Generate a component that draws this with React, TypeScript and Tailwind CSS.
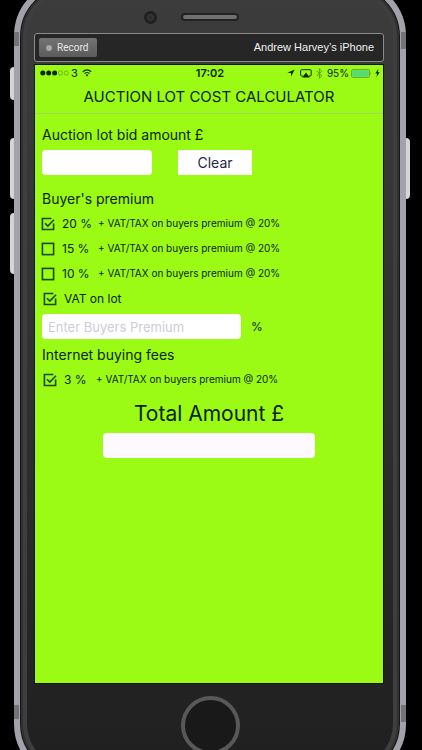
import { useState } from 'react';

type FeeRowProps = {
  id: string;
  label: string;
  note?: string;
  checked?: boolean;
  inset?: boolean;
};

function FeeRow({ id, label, note, checked = false, inset = false }: FeeRowProps) {
  const [on, setOn] = useState(checked);
  return (
    <div className={inset ? 'flex h-[25px] items-center pl-[2px]' : 'flex h-[25px] items-center'}>
      <span className="grid size-[14px] shrink-0 place-items-center">
        <input
          id={id}
          type="checkbox"
          checked={on}
          onChange={() => setOn(!on)}
          className="col-start-1 row-start-1 size-[14px] appearance-none"
        />
        <svg
          viewBox="0 0 14 14"
          className="pointer-events-none col-start-1 row-start-1 size-[14px]"
          fill="none"
          stroke="#1c4700"
          strokeWidth="1.6"
        >
          {on ? (
            <>
              <path d="M10.4 1.5H1.4V12.5H12.6V6.6" />
              <path d="M4 6.2L6.8 9L13 2.8" />
            </>
          ) : (
            <rect x="1.4" y="1.4" width="11.2" height="11.2" />
          )}
        </svg>
      </span>
      <label htmlFor={id} className="ml-[7px] text-[12px] whitespace-nowrap">
        {note ? (
          <span className={inset ? 'block w-[32px]' : 'block w-[36px]'}>{label}</span>
        ) : (
          label
        )}
      </label>
      {note && <span className="text-[10px] whitespace-nowrap">{note}</span>}
    </div>
  );
}

function StatusBar() {
  return (
    <div className="grid h-[16px] grid-cols-3 items-center pr-[3px] pl-[5px] text-[11px] text-[#0c2400]">
      <div className="flex items-center">
        <svg viewBox="0 0 29 6" className="h-[6px] w-[29px]">
          <circle cx="2.8" cy="3" r="2.5" fill="#0b2600" />
          <circle cx="8.7" cy="3" r="2.5" fill="#0b2600" />
          <circle cx="14.6" cy="3" r="2.5" fill="#0b2600" />
          <circle cx="20.4" cy="3" r="2.1" fill="none" stroke="#53900b" strokeWidth="0.6" />
          <circle cx="26.2" cy="3" r="2.1" fill="none" stroke="#53900b" strokeWidth="0.6" />
        </svg>
        <span className="ml-[2px]">3</span>
        <svg viewBox="0 0 10 8" className="ml-[4px] h-[8px] w-[10px]" fill="none" stroke="#123000">
          <path d="M0.8 2.8Q5 -1 9.2 2.8" strokeWidth="1.2" />
          <path d="M2.5 4.6Q5 2.4 7.5 4.6" strokeWidth="1.2" />
          <path d="M3.6 5.9Q5 4.7 6.4 5.9L5 7.5Z" fill="#123000" stroke="none" />
        </svg>
      </div>
      <span className="text-center font-semibold">17:02</span>
      <div className="flex items-center justify-end">
        <svg viewBox="0 0 8 8" className="h-[8px] w-[8px] shrink-0">
          <path d="M7.6 0.4L0.4 3.8L4 4.1L4.2 7.6Z" fill="#0b2600" />
        </svg>
        <svg viewBox="0 0 12 9" className="ml-[5px] h-[9px] w-[12px] shrink-0">
          <path
            d="M3 7H1.6Q0.6 7 0.6 6V1.7Q0.6 0.7 1.6 0.7H10.2Q11.2 0.7 11.2 1.7V6Q11.2 7 10.2 7H9"
            fill="none"
            stroke="#123000"
            strokeWidth="1"
          />
          <path d="M6 3.6L9.8 8.4H2.2Z" fill="#0b2600" />
        </svg>
        <svg
          viewBox="0 0 7 11"
          className="ml-[4px] h-[11px] w-[7px] shrink-0"
          fill="none"
          stroke="#5aa010"
          strokeWidth="1"
        >
          <path d="M0.8 3L5.8 7.8L3.4 10.2V0.8L5.8 3.2L0.8 8" />
        </svg>
        <span className="ml-[4px] text-[10px]">95%</span>
        <svg viewBox="0 0 21 9" className="ml-[2px] h-[9px] w-[21px] shrink-0">
          <rect x="0.5" y="0.5" width="18" height="8" rx="1.5" fill="none" stroke="#6aac30" />
          <rect x="1.2" y="1.2" width="16.6" height="6.6" fill="#56dc70" />
          <path d="M19.6 3V6Q20.8 4.5 19.6 3Z" fill="#337500" />
        </svg>
        <svg viewBox="0 0 5 8" className="ml-[3px] h-[8px] w-[5px] shrink-0">
          <path d="M3.4 0L0.2 4.5H2.1L1.5 8L4.8 3.3H2.8Z" fill="#0b2600" />
        </svg>
      </div>
    </div>
  );
}

export default function App() {
  const [bid, setBid] = useState('');
  const [premium, setPremium] = useState('');

  return (
    <main className="h-screen overflow-hidden bg-black pr-[16px] pl-[14px] font-['Inter','Liberation_Sans',sans-serif]">
      <div className="relative -mt-[20px] rounded-[56px] border-[6px] border-[#a3a2aa] bg-linear-to-b from-[#3c3c3c] via-[#303030] to-[#1f1f1f] pr-[16px] pl-[14px] shadow-[inset_0_0_0_1px_#171717,inset_0_0_0_3px_#303030,inset_0_0_0_7px_#3e3e3e]">
        {/* hardware buttons and antenna bands on the frame */}
        <div className="absolute top-[81px] -left-[10px] h-[33px] w-[4px] rounded-l-sm bg-[#d5d5d5]" />
        <div className="absolute top-[152px] -left-[10px] h-[61px] w-[4px] rounded-l-sm bg-[#d5d5d5]" />
        <div className="absolute top-[227px] -left-[10px] h-[61px] w-[4px] rounded-l-sm bg-[#d5d5d5]" />
        <div className="absolute top-[152px] -right-[10px] h-[61px] w-[4px] rounded-r-sm bg-[#d5d5d5]" />
        <div className="absolute top-[46px] -left-[6px] h-[14px] w-[5px] bg-[#747478]" />
        <div className="absolute top-[46px] -right-[6px] h-[17px] w-[5px] bg-[#747478]" />
        <div className="absolute bottom-[55px] -left-[6px] h-[14px] w-[5px] bg-[#747478]" />
        <div className="absolute bottom-[52px] -right-[6px] h-[17px] w-[5px] bg-[#747478]" />

        {/* camera, speaker and a spacer that keeps the speaker centred */}
        <div className="flex h-[47px] items-start justify-center gap-[24px] pt-[25px] pl-[2px]">
          <div className="grid size-[13px] place-items-center rounded-full bg-[#202020]">
            <div className="size-[7px] rounded-full border border-[#3e3e3e] bg-[#2c2c2c]" />
          </div>
          <div className="mt-[2px] h-[8px] w-[58px] rounded-full border-2 border-[#222222] bg-[#707070]" />
          <div className="w-[13px]" />
        </div>

        <header className="flex h-[29px] items-center justify-between rounded-[3px] border border-[#8b8b8b] bg-[#262626] px-[4px]">
          <button
            type="button"
            className="flex h-[19px] w-[58px] items-center gap-[5px] rounded-[2px] bg-linear-to-b from-[#737373] to-[#5c5c5c] pl-[7px] font-['Roboto',sans-serif] text-[10px] text-[#e8e8e8]"
          >
            <span className="size-[6px] rounded-full bg-[#a8a8a8]" />
            Record
          </button>
          <span className="pr-[5px] font-['Liberation_Sans',sans-serif] text-[11px] text-[#f1f1f1]">
            Andrew Harvey’s iPhone
          </span>
        </header>

        <div className="mt-[2px] border border-[#141414]">
          <section className="min-h-[618px] bg-[#9bfb14] text-[#0c2400]">
            <StatusBar />
            <h1 className="flex h-[33px] items-center justify-center border-b border-[#a3d65c] text-[15px] whitespace-nowrap">
              AUCTION LOT COST CALCULATOR
            </h1>

            <div className="pt-[11px]">
              <div className="px-[7px]">
                <label htmlFor="bid" className="block text-[14px] leading-[20px]">
                  Auction lot bid amount £
                </label>
                <div className="mt-[5px] flex gap-[26px]">
                  <input
                    id="bid"
                    value={bid}
                    onChange={(e) => setBid(e.target.value)}
                    className="h-[25px] w-[110px] rounded-[4px] bg-white px-[6px] text-[13px] outline-none"
                  />
                  <button
                    type="button"
                    onClick={() => setBid('')}
                    className="h-[25px] w-[74px] bg-white text-[14px] text-[#26264a]"
                  >
                    Clear
                  </button>
                </div>
                <h2 className="mt-[14px] text-[14px] leading-[20px]">Buyer's premium</h2>
              </div>

              <div className="mt-[2px] px-[6px]">
                <FeeRow id="p20" label="20 %" note="+ VAT/TAX on buyers premium @ 20%" checked />
                <FeeRow id="p15" label="15 %" note="+ VAT/TAX on buyers premium @ 20%" />
                <FeeRow id="p10" label="10 %" note="+ VAT/TAX on buyers premium @ 20%" />
                <FeeRow id="vat" label="VAT on lot" checked inset />
              </div>

              <div className="px-[7px]">
                <div className="mt-[3px] flex items-center gap-[10px]">
                  <input
                    id="premium"
                    aria-label="Buyers premium"
                    placeholder="Enter Buyers Premium"
                    value={premium}
                    onChange={(e) => setPremium(e.target.value)}
                    className="h-[25px] w-[199px] rounded-[4px] bg-white px-[6px] text-[13px] outline-none placeholder:text-[#cfccd8]"
                  />
                  <label htmlFor="premium" className="text-[12px]">
                    %
                  </label>
                </div>
                <h2 className="mt-[6px] text-[14px] leading-[20px]">Internet buying fees</h2>
              </div>

              <div className="mt-[2px] px-[6px]">
                <FeeRow id="net" label="3 %" note="+ VAT/TAX on buyers premium @ 20%" checked inset />
              </div>

              <div className="mt-[7px] flex flex-col items-center px-[6px]">
                <label htmlFor="total" className="text-[21px] leading-[30px]">
                  Total Amount £
                </label>
                <input
                  id="total"
                  readOnly
                  className="mt-[4px] h-[25px] w-[212px] rounded-[4px] bg-[#fdf9ff] px-[6px] text-[13px] outline-none"
                />
              </div>
            </div>
          </section>
        </div>

        {/* home button */}
        <div className="flex h-[90px] justify-center pt-[12px] pl-[2px]">
          <button
            type="button"
            aria-label="Home"
            className="size-[59px] rounded-full border-[4px] border-[#585858] bg-[#191919]"
          />
        </div>
      </div>
    </main>
  );
}
